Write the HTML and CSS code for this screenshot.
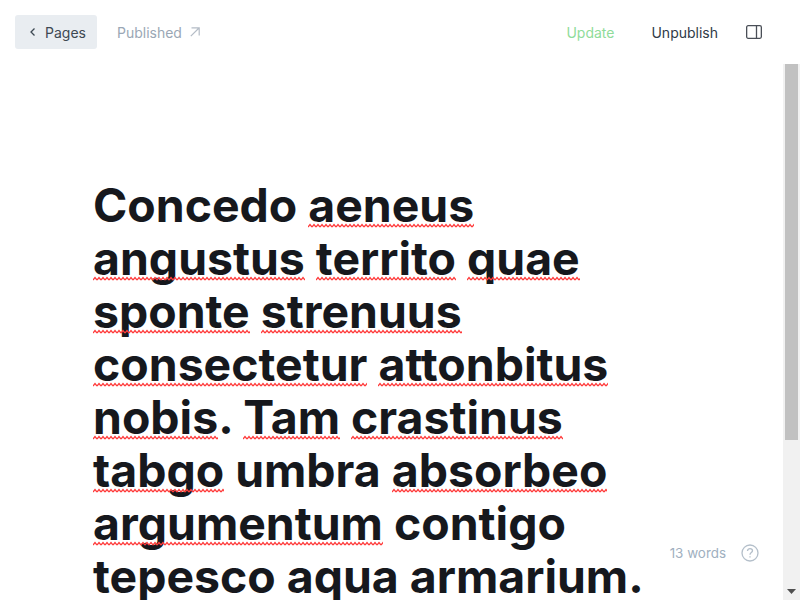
FILE: index.html
```html
<!DOCTYPE html>
<html lang="en">
<head>
<meta charset="UTF-8">
<title>Editor</title>
<link rel="stylesheet" href="styles.css">
</head>
<body>

<div class="topbar">
    <div class="topbar-left">
        <a href="#" class="back-btn">
            <svg width="8" height="10" viewBox="0 0 8 10" fill="none" stroke="#3d4852" stroke-width="1.3"><path d="M5.5 1.5 L2 5 L5.5 8.5"/></svg>
            Pages
        </a>
        <a href="#" class="status">
            Published
            <svg width="10" height="10" viewBox="0 0 10 10" fill="none" stroke="#b4bcc6" stroke-width="1.2"><path d="M0.8 9.2 L9 1 M1.5 0.8 H9.2 V8.5"/></svg>
        </a>
    </div>
    <div class="topbar-right">
        <a href="#" class="update">Update</a>
        <a href="#" class="unpublish">Unpublish</a>
        <svg class="panel-icon" width="16" height="14" viewBox="0 0 16 14" fill="none" stroke="#4a4f57" stroke-width="1.3"><rect x="0.65" y="0.65" width="14.7" height="12.7" rx="1.5"/><path d="M10.5 0.6 V13.4"/></svg>
    </div>
</div>

<div class="main">
    <div class="editor">
        <h1 class="title">Concedo <span class="typo">aeneus</span> <span class="typo">angustus</span> <span class="typo">territo</span> <span class="typo">quae</span> <span class="typo">sponte</span> <span class="typo">strenuus</span> <span class="typo">consectetur</span> <span class="typo">attonbitus</span> <span class="typo">nobis</span>. <span class="typo">Tam</span> <span class="typo">crastinus</span> <span class="typo">tabgo</span> umbra <span class="typo">absorbeo</span> <span class="typo">argumentum</span> contigo tepesco aqua armarium.</h1>
    </div>
    <div class="scrollbar">
        <div class="scroll-thumb"></div>
        <svg class="scroll-arrow" width="9" height="5" viewBox="0 0 9 5"><path d="M0 0H9L4.5 5z" fill="#505050"/></svg>
    </div>
</div>

<div class="word-count">
    <span>13 words</span>
    <svg width="18" height="18" viewBox="0 0 18 18" fill="none" stroke="#b4bfca" stroke-width="1.3"><circle cx="9" cy="9" r="8"/><path d="M6.5 7 C6.5 5.4 7.7 4.6 9 4.6 C10.4 4.6 11.5 5.5 11.5 6.8 C11.5 8.6 9 8.6 9 10.8"/><path d="M9 12.3 V13.6"/></svg>
</div>

</body>
</html>
```

FILE: styles.css
```css
body {
    font-family: Inter, sans-serif;
    margin: 0;
    height: 600px;
    overflow: hidden;
    display: flex;
    flex-direction: column;
    position: relative;
    background-color: white;
}
a {
    text-decoration: none;
}
.topbar {
    height: 64px;
    flex-shrink: 0;
    display: flex;
    justify-content: space-between;
    align-items: center;
    padding: 0 38px 0 15px;
    font-size: 14px;
}
.topbar-left, .topbar-right {
    display: flex;
    align-items: center;
}
.back-btn {
    display: flex;
    align-items: center;
    gap: 8px;
    height: 34px;
    padding: 0 11px 0 14px;
    background-color: #e9edf1;
    border-radius: 3px;
    color: #3d4852;
}
.status {
    display: flex;
    align-items: center;
    gap: 8px;
    margin-left: 20px;
    color: #9aa7b5;
}
.update {
    color: #8fdc9a;
}
.unpublish {
    color: #2f3a48;
    margin-left: 37px;
}
.panel-icon {
    margin-left: 28px;
}
.main {
    flex: 1;
    display: flex;
    min-height: 0;
}
.editor {
    flex: 1;
    overflow: hidden;
    padding: 0 124px 0 93px;
}
.scrollbar {
    width: 17px;
    flex-shrink: 0;
    display: flex;
    flex-direction: column;
    align-items: center;
    background-color: #f1f1f1;
}
.scroll-thumb {
    width: 13px;
    height: 376px;
    background-color: #c1c1c1;
}
.scroll-arrow {
    margin-top: auto;
    margin-bottom: 6px;
}
.title {
    margin: 115px 0 0;
    font-size: 46.4px;
    font-weight: 700;
    line-height: 53px;
    color: #16181d;
}
.typo {
    position: relative;
}
/* spell check squiggle, painted over the descenders */
.typo::after {
    content: "";
    position: absolute;
    left: 0;
    right: 0;
    bottom: 5px;
    height: 5px;
    background-image: url("data:image/svg+xml,%3Csvg xmlns='http://www.w3.org/2000/svg' width='4' height='5'%3E%3Cpath d='M0 4L2 1.5L4 4' fill='none' stroke='%23ff3b3b' stroke-width='1.3'/%3E%3C/svg%3E");
    background-repeat: repeat-x;
}
.word-count {
    position: absolute;
    right: 41px;
    bottom: 38px;
    display: flex;
    align-items: center;
    gap: 15px;
    font-size: 13.4px;
    color: #9fb0bf;
}
```
